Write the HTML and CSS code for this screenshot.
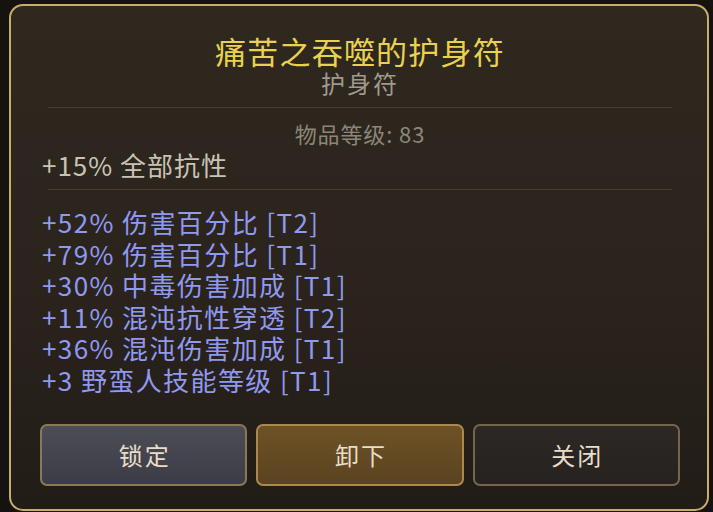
FILE: index.html
```html
<!DOCTYPE html>
<html lang="zh-CN">
<head>
<meta charset="utf-8">
<title>痛苦之吞噬的护身符</title>
<link rel="stylesheet" href="styles.css">
</head>
<body>
<div class="dialog">
  <h1 class="title">痛苦之吞噬的护身符</h1>
  <div class="subtitle">护身符</div>
  <div class="divider"></div>
  <div class="ilvl">物品等级: 83</div>
  <div class="implicit">+15% 全部抗性</div>
  <div class="divider divider-2"></div>
  <ul class="affixes">
    <li>+52% 伤害百分比 [T2]</li>
    <li>+79% 伤害百分比 [T1]</li>
    <li>+30% 中毒伤害加成 [T1]</li>
    <li>+11% 混沌抗性穿透 [T2]</li>
    <li>+36% 混沌伤害加成 [T1]</li>
    <li>+3 野蛮人技能等级 [T1]</li>
  </ul>
  <div class="actions">
    <button class="btn btn-lock">锁定</button>
    <button class="btn btn-unequip">卸下</button>
    <button class="btn btn-close">关闭</button>
  </div>
</div>
</body>
</html>
```

FILE: styles.css
```css
* { box-sizing: border-box; }
html, body {
  margin: 0;
  padding: 0;
  background: #16120f;
  width: 713px;
  height: 512px;
  overflow: hidden;
  font-family: "Noto Sans CJK SC", "Noto Sans", sans-serif;
}
.dialog {
  margin: 4px 0 0 9px;
  width: 700px;
  height: 507px;
  border: 2px solid #c8ac69;
  border-radius: 14px;
  background: linear-gradient(180deg, #2f281f 0%, #2b241d 55%, #221c17 100%);
  padding: 27px 27px 0 29px;
  display: flex;
  flex-direction: column;
}
.title {
  margin: 0;
  text-align: center;
  font-size: 31px;
  line-height: 36px;
  letter-spacing: 1.2px;
  font-weight: 400;
  color: #e8d24f;
}
.subtitle {
  text-align: center;
  font-size: 24px;
  line-height: 28px;
  letter-spacing: 2px;
  color: #a09a8d;
}
.divider {
  margin: 10px 8px 0 8px;
  height: 1px;
  background: #473d31;
}
.ilvl {
  margin-top: 12px;
  text-align: center;
  font-size: 22px;
  line-height: 26px;
  letter-spacing: 0.9px;
  color: #8c8679;
}
.implicit {
  margin-top: 3px;
  padding-left: 2px;
  font-size: 26px;
  line-height: 32px;
  letter-spacing: 1px;
  color: #c9c3b5;
}
.divider-2 {
  margin-top: 8px;
}
.affixes {
  list-style: none;
  margin: 16px 0 0 0;
  padding: 0 0 0 2px;
  font-size: 26px;
  line-height: 31.6px;
  letter-spacing: 1.4px;
  color: #8f99f0;
}
.affixes li { margin: 0; }
.actions {
  margin-top: 28px;
  display: grid;
  grid-template-columns: repeat(3, 1fr);
  gap: 9px;
}
.btn {
  height: 62px;
  border-radius: 7px;
  font-family: "Noto Sans CJK SC", "Noto Sans", sans-serif;
  font-size: 24px;
  letter-spacing: 2px;
  text-indent: 2px;
  color: #e8dec8;
  border: 2px solid #8b7853;
  cursor: pointer;
}
.btn-lock {
  background: linear-gradient(180deg, #4d4d58 0%, #3c3c46 100%);
  border-color: #8b7956;
}
.btn-unequip {
  background: linear-gradient(180deg, #6e5226 0%, #5a4320 100%);
  border-color: #a98a4c;
}
.btn-close {
  background: linear-gradient(180deg, #2d2824 0%, #262220 100%);
  border-color: #75654b;
}
```
